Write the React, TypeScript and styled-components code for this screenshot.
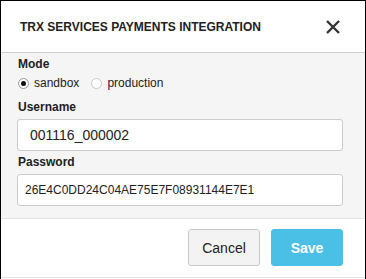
import React from "react";
import styled, { createGlobalStyle } from "styled-components";

const Global = createGlobalStyle`
  html, body { margin: 0; padding: 0; background: #fff; }
  body { font-family: "Liberation Sans", Arial, sans-serif; color: #222; }
  * { box-sizing: border-box; }
`;

const Modal = styled.div`
  width: 366px;
  height: 279px;
  border: 1px solid #000;
  border-bottom: none;
  display: flex;
  flex-direction: column;
  background: #fff;
`;

const Header = styled.div`
  height: 52px;
  flex: none;
  display: flex;
  align-items: center;
  justify-content: space-between;
  padding: 0 25px 0 19px;
  border-bottom: 1px solid #cfcfcf;
`;

const Title = styled.h1`
  margin: 0;
  font-size: 12px;
  font-weight: bold;
  color: #222;
`;

const Close = styled.button`
  border: none;
  background: none;
  padding: 0;
  width: 14px;
  height: 14px;
  display: flex;
  cursor: pointer;
`;

const Body = styled.div`
  height: 166px;
  flex: none;
  background: #f5f5f5;
  border-bottom: 1px solid #e3e3e3;
  padding: 4px 22px 0 16px;
  display: flex;
  flex-direction: column;
`;

const Label = styled.div<{ $top?: number }>`
  font-size: 12px;
  font-weight: bold;
  line-height: 14px;
  margin-top: ${(p) => p.$top ?? 0}px;
  padding-left: 1px;
  color: #222;
`;

const RadioRow = styled.div`
  display: flex;
  align-items: center;
  gap: 11px;
  height: 18px;
  margin-top: 3px;
`;

const RadioOption = styled.label`
  display: flex;
  align-items: center;
  gap: 5px;
  font-size: 12px;
  color: #222;
`;

const RadioCircle = styled.span<{ $on?: boolean }>`
  width: 11px;
  height: 11px;
  border-radius: 50%;
  border: 1px solid ${(p) => (p.$on ? "#9a9a9a" : "#c8c8c8")};
  background: #fff;
  display: flex;
  align-items: center;
  justify-content: center;
  margin-left: 1px;
  &::after {
    content: "";
    width: 5px;
    height: 5px;
    border-radius: 50%;
    background: ${(p) => (p.$on ? "#111" : "transparent")};
  }
`;

const Input = styled.div<{ $size: number; $pad: number; $h: number }>`
  height: ${(p) => p.$h}px;
  margin-top: 5px;
  border: 1px solid #cccccc;
  border-radius: 3px;
  background: #fff;
  display: flex;
  align-items: center;
  padding-left: ${(p) => p.$pad}px;
  font-size: ${(p) => p.$size}px;
  color: #222;
`;

const Footer = styled.div`
  height: 59px;
  flex: none;
  border-bottom: 1px solid #e3e3e3;
  display: flex;
  justify-content: flex-end;
  align-items: flex-start;
  padding: 10px 22px 0 0;
  gap: 11px;
`;

const Button = styled.button<{ $primary?: boolean }>`
  width: 72px;
  height: 37px;
  border-radius: 3px;
  font-family: "Liberation Sans", Arial, sans-serif;
  font-size: 14px;
  font-weight: ${(p) => (p.$primary ? "bold" : "normal")};
  color: ${(p) => (p.$primary ? "#fff" : "#222")};
  background: ${(p) => (p.$primary ? "#4bc0e6" : "#f3f3f3")};
  border: 1px solid ${(p) => (p.$primary ? "#4bc0e6" : "#c9c9c9")};
  padding: 0;
`;

export default function App() {
  return (
    <>
      <Global />
      <Modal>
        <Header>
          <Title>TRX SERVICES PAYMENTS INTEGRATION</Title>
          <Close aria-label="Close">
            <svg width="14" height="14" viewBox="0 0 14 14">
              <path d="M1 1 L13 13 M13 1 L1 13" stroke="#333" strokeWidth="2.4" strokeLinecap="butt" />
            </svg>
          </Close>
        </Header>
        <Body>
          <Label>Mode</Label>
          <RadioRow>
            <RadioOption>
              <RadioCircle $on />
              sandbox
            </RadioOption>
            <RadioOption>
              <RadioCircle />
              production
            </RadioOption>
          </RadioRow>
          <Label $top={8}>Username</Label>
          <Input $size={14} $pad={12} $h={32}>001116_000002</Input>
          <Label $top={4}>Password</Label>
          <Input $size={12} $pad={7} $h={32}>26E4C0DD24C04AE75E7F08931144E7E1</Input>
        </Body>
        <Footer>
          <Button>Cancel</Button>
          <Button $primary>Save</Button>
        </Footer>
      </Modal>
    </>
  );
}
